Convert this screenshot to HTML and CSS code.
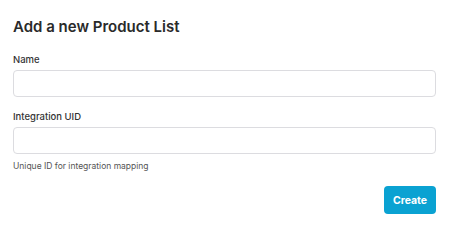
FILE: index.html
```html
<!DOCTYPE html>
<html lang="en">
<head>
<meta charset="UTF-8" />
<meta name="viewport" content="width=device-width, initial-scale=1" />
<title>Add a new Product List</title>
<link rel="stylesheet" href="styles.css">
</head>
<body>

<!-- Yeni liste formu -->
<form class="panel">
  <h2>Add a new Product List</h2>

  <div class="field">
    <label for="listName">Name</label>
    <input type="text" id="listName" autocomplete="off" />
  </div>

  <div class="field">
    <label for="listUid">Integration UID</label>
    <input type="text" id="listUid" autocomplete="off" />
    <div class="hint">Unique ID for integration mapping</div>
  </div>

  <div class="actions">
    <button type="button">Create</button>
  </div>
</form>

</body>
</html>
```

FILE: styles.css
```css
/* Temel stil */
body {
  margin: 0;
  padding: 0;
  background: #fff;
  color: #2b2b2b;
  font-family: Inter, 'Noto Sans', sans-serif;
}
.panel {
  padding: 17px 39px 0 13px;
}
h2 {
  margin: 0 0 17px 0;
  font-size: 15px;
  line-height: 20px;
  font-weight: 600;
  color: #2a2a2a;
}
.field {
  margin-bottom: 14px;
}
label {
  display: block;
  font-size: 9.5px;
  font-weight: 500;
  line-height: 12px;
  color: #333;
  margin-bottom: 4px;
}
input {
  display: block;
  box-sizing: border-box;
  width: 100%;
  height: 27px;
  border: 1px solid #dcdce0;
  border-radius: 4px;
  padding: 0 8px;
  font-size: 12px;
  outline: none;
}
.hint {
  margin-top: 6px;
  font-size: 8.5px;
  line-height: 12px;
  color: #555;
}
.actions {
  display: flex;
  justify-content: flex-end;
  margin-top: 11px;
}
button {
  background: #0aa2d2;
  border: none;
  border-radius: 4px;
  color: #fff;
  font-family: inherit;
  font-size: 10.5px;
  font-weight: 700;
  width: 52px;
  height: 28px;
  padding: 0;
  cursor: pointer;
}
```
